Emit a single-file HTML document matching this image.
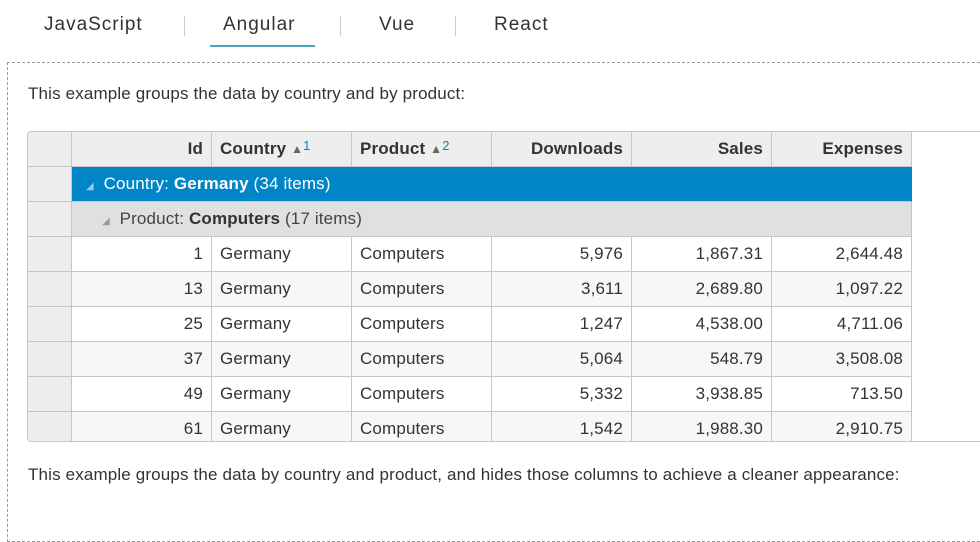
<!DOCTYPE html>
<html><head><meta charset="utf-8"><style>
*{margin:0;padding:0;box-sizing:border-box}
body{width:980px;height:502px;overflow:hidden;background:#fff;font-family:"Liberation Sans",Arial,sans-serif;color:#333;position:relative}
.tab{position:absolute;top:13px;font-size:19px;line-height:24px;color:#333;font-family:"Liberation Sans",sans-serif;letter-spacing:1px}
.sep{position:absolute;top:16px;width:1px;height:20px;background:#ccc}
.box{position:absolute;left:7px;top:62px;width:973px;height:480px;border:1px dashed #999;border-right:none}
.p{position:absolute;left:28px;font-size:17px;letter-spacing:0.15px;color:#333}
.grid{position:absolute;left:27px;top:131px;width:960px;height:311px;border:1px solid #c6c6c6;border-right:none;border-radius:4px 0 0 4px;overflow:hidden}
.c{position:absolute;height:35px;line-height:34px;font-size:17px;letter-spacing:0.15px;padding:0 8px;border-right:1px solid #c6c6c6;border-bottom:1px solid #c6c6c6;white-space:nowrap;overflow:hidden}
.r{text-align:right}
.h{background:#eee;font-weight:bold;color:#333}
.rh{background:#eee}
.tri{font-size:12px;color:#666;position:relative;top:-1px}
.sup{color:#0085c7;font-size:13px;font-weight:normal;position:relative;top:-4px}
</style></head><body>
<div class="tab" style="left:44px">JavaScript</div>
<div class="sep" style="left:184px"></div>
<div class="tab" style="left:223px">Angular</div>
<div style="position:absolute;left:210px;top:45px;width:105px;height:2px;background:#4aa3bf"></div>
<div class="sep" style="left:340px"></div>
<div class="tab" style="left:379px">Vue</div>
<div class="sep" style="left:455px"></div>
<div class="tab" style="left:494px">React</div>
<div class="box"></div>
<div class="p" style="top:84px">This example groups the data by country and by product:</div>
<div class="grid">
<div class="c h" style="left:0;top:0;width:44px"></div>
<div class="c h r" style="left:44px;top:0;width:140px">Id</div>
<div class="c h" style="left:184px;top:0;width:140px">Country <span class="tri">▲</span><span class="sup">1</span></div>
<div class="c h" style="left:324px;top:0;width:140px">Product <span class="tri">▲</span><span class="sup">2</span></div>
<div class="c h r" style="left:464px;top:0;width:140px">Downloads</div>
<div class="c h r" style="left:604px;top:0;width:140px">Sales</div>
<div class="c h r" style="left:744px;top:0;width:140px">Expenses</div>
<div class="c rh" style="left:0;top:35px;width:44px"></div>
<div class="c" style="left:44px;top:35px;width:840px;background:#0085c7;color:#fff;padding-left:14px;border-right-color:#0085c7"><span style="font-size:10px;color:#9cc8e4">◢</span>&nbsp; Country: <b>Germany</b> (34 items)</div>
<div class="c rh" style="left:0;top:70px;width:44px"></div>
<div class="c" style="left:44px;top:70px;width:840px;background:#e0e0e0;color:#444;padding-left:30px"><span style="font-size:10px;color:#999">◢</span>&nbsp; Product: <b style="color:#333">Computers</b> (17 items)</div>
</div>
<script>
var d=[["1","5,976","1,867.31","2,644.48"],["13","3,611","2,689.80","1,097.22"],["25","1,247","4,538.00","4,711.06"],["37","5,064","548.79","3,508.08"],["49","5,332","3,938.85","713.50"],["61","1,542","1,988.30","2,910.75"]];
var g=document.querySelector('.grid'),h='';
d.forEach(function(r,i){var t=105+i*35,bg=i%2?'#f7f7f7':'#fff';
h+='<div class="c rh" style="left:0;top:'+t+'px;width:44px"></div>';
h+='<div class="c r" style="left:44px;top:'+t+'px;width:140px;background:'+bg+'">'+r[0]+'</div>';
h+='<div class="c" style="left:184px;top:'+t+'px;width:140px;background:'+bg+'">Germany</div>';
h+='<div class="c" style="left:324px;top:'+t+'px;width:140px;background:'+bg+'">Computers</div>';
h+='<div class="c r" style="left:464px;top:'+t+'px;width:140px;background:'+bg+'">'+r[1]+'</div>';
h+='<div class="c r" style="left:604px;top:'+t+'px;width:140px;background:'+bg+'">'+r[2]+'</div>';
h+='<div class="c r" style="left:744px;top:'+t+'px;width:140px;background:'+bg+'">'+r[3]+'</div>';});
g.insertAdjacentHTML('beforeend',h);
</script>
<div class="p" style="top:465px">This example groups the data by country and product, and hides those columns to achieve a cleaner appearance:</div>
</body></html>
